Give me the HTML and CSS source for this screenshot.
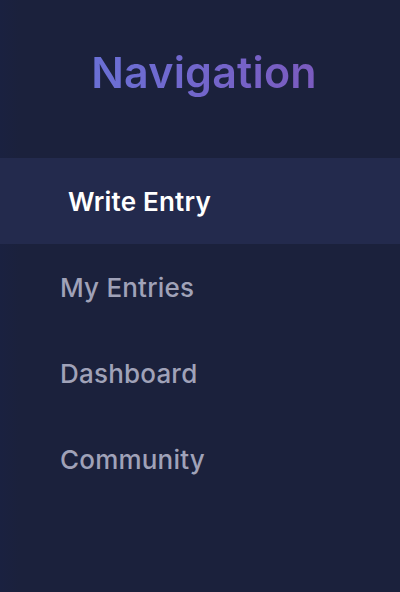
FILE: index.html
```html
<!DOCTYPE html>
<html lang="en">
<head>
<meta charset="utf-8">
<link rel="stylesheet" href="styles.css">
</head>
<body>
<aside class="sidebar">
  <h1 class="title">Navigation</h1>
  <nav class="nav">
    <a class="nav-item active">Write Entry</a>
    <a class="nav-item">My Entries</a>
    <a class="nav-item">Dashboard</a>
    <a class="nav-item">Community</a>
  </nav>
</aside>
</body>
</html>
```
FILE: styles.css
```css
html, body {
  margin: 0;
  padding: 0;
  height: 100%;
}
body {
  background: #1b213c;
  font-family: Inter, "Noto Sans", sans-serif;
}
.sidebar {
  height: 592px;
  display: flex;
  flex-direction: column;
  background: linear-gradient(90deg, #1a2140 0, #1b213c 20px);
}
.title {
  margin: 0 0 61px 8px;
  padding-top: 47px;
  height: 50px;
  line-height: 50px;
  text-align: center;
  font-size: 43px;
  font-weight: 600;
  letter-spacing: 0.2px;
  background: linear-gradient(90deg, #6a70d6, #7b5bbf);
  -webkit-background-clip: text;
  background-clip: text;
  color: transparent;
  align-self: center;
}
.nav {
  display: flex;
  flex-direction: column;
}
.nav-item {
  height: 86px;
  display: flex;
  align-items: center;
  padding-left: 60px;
  font-size: 26px;
  font-weight: 500;
  letter-spacing: 0.2px;
  color: #a0a2b8;
}
.nav-item.active {
  background: #232a4d;
  color: #ffffff;
  font-weight: 600;
  padding-left: 68px;
}
```
